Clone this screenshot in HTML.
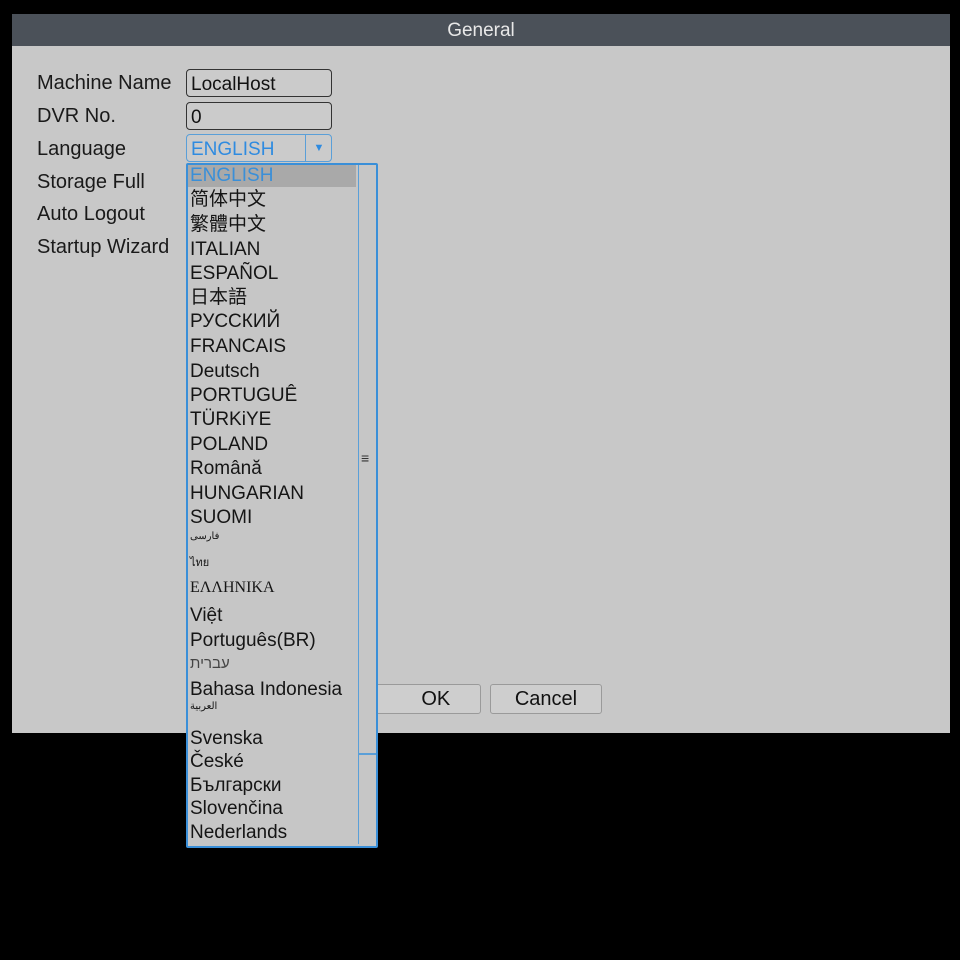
<!DOCTYPE html>
<html><head><meta charset="utf-8"><style>
body{margin:0;width:960px;height:960px;background:#000;position:relative;overflow:hidden;font-family:"Liberation Sans","Noto Sans CJK SC",sans-serif;}
.a{position:absolute}
#title{left:12px;top:14px;width:938px;height:32px;background:#4b5159;color:#e8e8e8;font-size:19px;text-align:center;line-height:34px}
#panel{left:12px;top:46px;width:938px;height:687px;background:#c8c8c8}
.lb{font-size:20px;color:#1a1a1a;left:37px}
.f{left:186px;width:146px;height:28px;border:1px solid #333;border-radius:4px;background:#cbcbcb;font-size:19px;line-height:29px;padding-left:4px;box-sizing:border-box;color:#111}
.btn{top:684px;height:28px;border:1px solid #9a9a9a;border-radius:3px;background:#cecece;font-size:20px;text-align:center;line-height:29px;color:#111}
#list{left:186px;top:163px;width:188px;height:681px;border:2px solid #3a8fd8;background:#c6c6c6;border-radius:2px}
.it{left:190px;font-size:19px;color:#151515;white-space:nowrap;line-height:24px;height:24px}
</style></head><body>
<div id="title" class="a">General</div>
<div id="panel" class="a"></div>
<div class="a lb" style="top:72px">Machine Name</div>
<div class="a lb" style="top:105px">DVR No.</div>
<div class="a lb" style="top:138px">Language</div>
<div class="a lb" style="top:171px">Storage Full</div>
<div class="a lb" style="top:203px">Auto Logout</div>
<div class="a lb" style="top:236px">Startup Wizard</div>
<div class="a f" style="top:69px">LocalHost</div>
<div class="a f" style="top:102px">0</div>
<div class="a f" style="top:134px;border-color:#5a9fd8;color:#2f8be0">ENGLISH<span class="a" style="left:118px;top:0;width:26px;height:26px;border-left:1px solid #5a9fd8;text-align:center;font-size:11px;line-height:26px">▼</span></div>
<div class="a btn" style="left:374px;width:105px">&nbsp;&nbsp;&nbsp;OK</div>
<div class="a btn" style="left:490px;width:110px">Cancel</div>
<div id="list" class="a"></div>
<div class="a" style="left:188px;top:165px;width:168px;height:22px;background:#a9a9a9"></div>
<div class="a" style="left:358px;top:165px;width:1px;height:679px;background:#5a9fd8"></div>
<div class="a" style="left:359px;top:753px;width:17px;height:2px;background:#5a9fd8"></div>
<div class="a" style="left:361px;top:450px;font-size:14px;color:#333">≡</div>
<div class="a it" style="top:164px;color:#3a8fd8">ENGLISH</div>
<div class="a it" style="top:188px">简体中文</div>
<div class="a it" style="top:213px">繁體中文</div>
<div class="a it" style="top:238px">ITALIAN</div>
<div class="a it" style="top:262px">ESPAÑOL</div>
<div class="a it" style="top:286px">日本語</div>
<div class="a it" style="top:310px">РУССКИЙ</div>
<div class="a it" style="top:335px">FRANCAIS</div>
<div class="a it" style="top:360px">Deutsch</div>
<div class="a it" style="top:384px">PORTUGUÊ</div>
<div class="a it" style="top:408px">TÜRKiYE</div>
<div class="a it" style="top:433px">POLAND</div>
<div class="a it" style="top:457px">Română</div>
<div class="a it" style="top:482px">HUNGARIAN</div>
<div class="a it" style="top:506px">SUOMI</div>
<div class="a it" style="top:525px;font-size:10px">فارسی</div>
<div class="a it" style="top:551px;font-size:11px">ไทย</div>
<div class="a it" style="top:576px;font-family:'Liberation Serif',serif;font-size:16px">ΕΛΛΗΝΙΚΑ</div>
<div class="a it" style="top:604px">Việt</div>
<div class="a it" style="top:629px">Português(BR)</div>
<div class="a it" style="top:652px;font-size:15px;color:#444">עברית</div>
<div class="a it" style="top:678px">Bahasa Indonesia</div>
<div class="a it" style="top:695px;font-size:10px">العربية</div>
<div class="a it" style="top:727px">Svenska</div>
<div class="a it" style="top:750px">České</div>
<div class="a it" style="top:774px">Български</div>
<div class="a it" style="top:797px">Slovenčina</div>
<div class="a it" style="top:821px">Nederlands</div>
</body></html>
